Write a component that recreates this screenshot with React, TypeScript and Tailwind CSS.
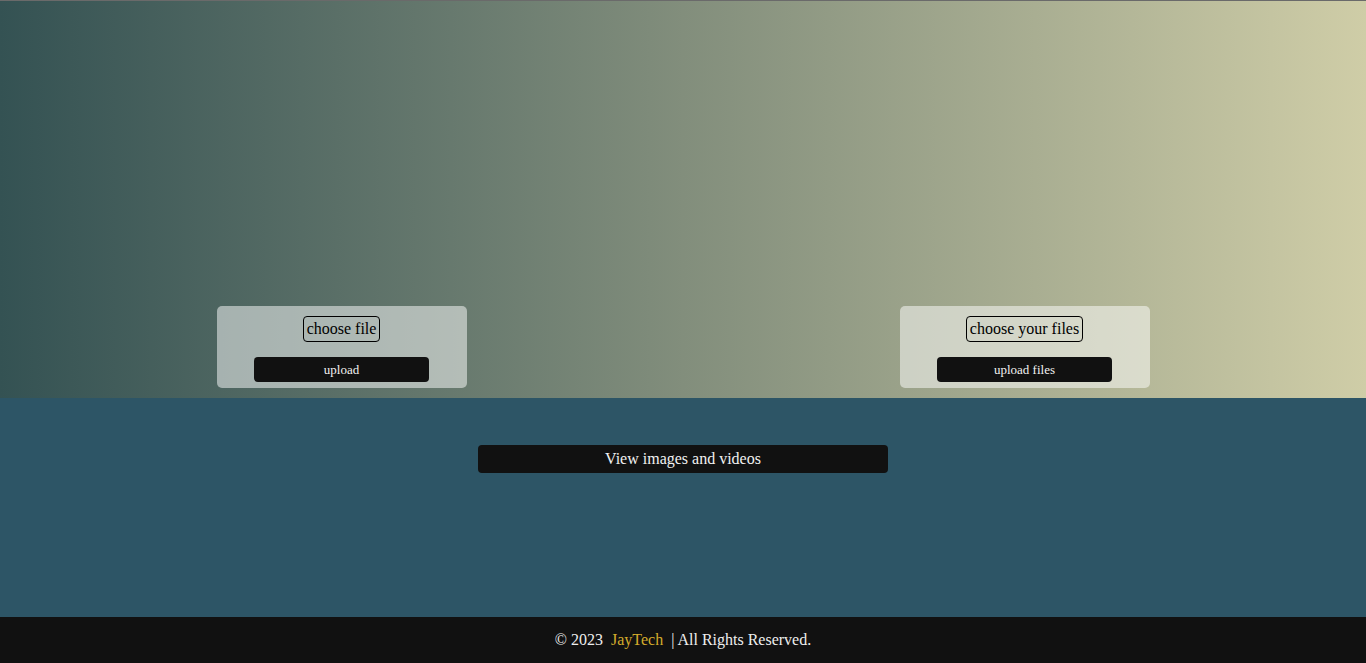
import React from 'react'

function UploadCard({ label, action }: { label: string; action: string }) {
  return (
    <div className="w-[250px] h-[82px] bg-white/50 rounded-[5px] flex flex-col items-center pt-[10px]">
      <label className="border border-black rounded-[4px] px-[3px] h-[26px] leading-[24px] text-[16px] text-black">
        {label}
      </label>
      <button className="mt-[15px] w-[175px] h-[25px] bg-[#111] text-[#f2f2f2] text-[13px] rounded-[4px]">
        {action}
      </button>
    </div>
  )
}

export default function App() {
  return (
    <div className="min-h-[663px] flex flex-col" style={{ fontFamily: '"Liberation Serif", serif' }}>
      <div className="h-[398px] border-t border-[#6a6a6a] bg-gradient-to-r from-[#345253] via-[#828e7c] to-[#cfcda7] flex justify-around items-end pb-[10px]">
        <UploadCard label="choose file" action="upload" />
        <UploadCard label="choose your files" action="upload files" />
      </div>
      <div className="h-[219px] bg-[#2d5566] flex justify-center pt-[47px]">
        <button className="w-[410px] h-[28px] bg-[#111] text-[#f2f2f2] text-[16px] rounded-[4px]">
          View images and videos
        </button>
      </div>
      <footer className="h-[46px] bg-[#111] text-[#eee] text-[16px] flex items-center justify-center whitespace-pre">
        <span>© 2023  </span>
        <span className="text-[#d4ac2c]">JayTech</span>
        <span>  | All Rights Reserved.</span>
      </footer>
    </div>
  )
}
